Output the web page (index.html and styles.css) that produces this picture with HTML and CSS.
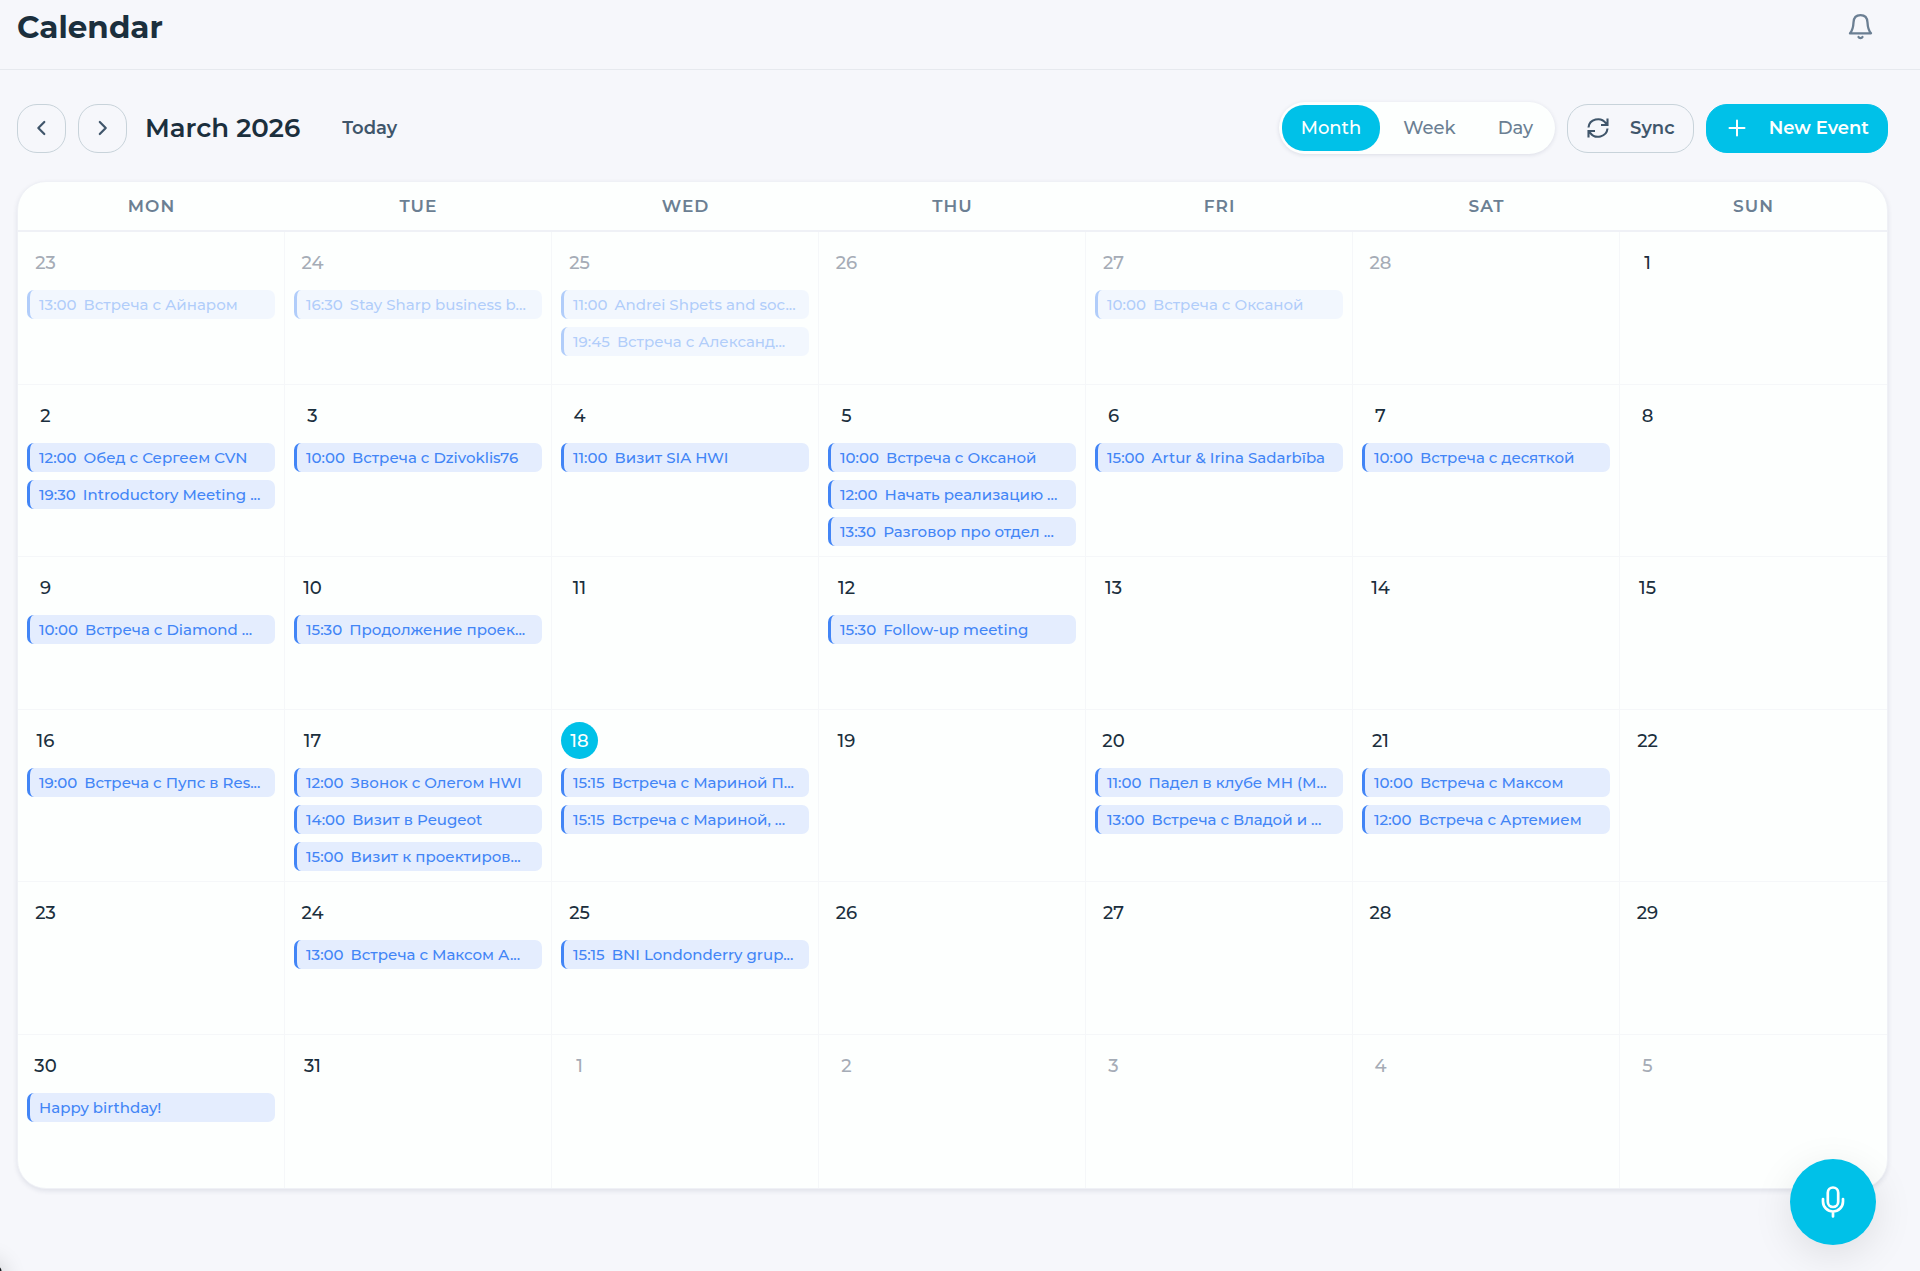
FILE: index.html
```html
<!DOCTYPE html>
<html lang="en">
<head>
    <meta charset="UTF-8">
    <meta name="viewport" content="width=device-width, initial-scale=1.0">
    <title>Calendar</title>
    <link rel="stylesheet" href="styles.css">
</head>
<body>
    <header class="page-header">
        <h1>Calendar</h1>
        <button class="icon-btn" type="button" aria-label="Notifications">
            <svg class="bell" viewBox="0 0 28 30" fill="none" stroke="currentColor" stroke-width="2.300" stroke-linecap="round" stroke-linejoin="round">
                <path d="M14.500 3.200C10.300 3.200 7.700 6 7.500 10.500C7.300 15 6.500 18.500 4 21.300H25C22.500 18.500 21.700 15 21.500 10.500C21.300 6 18.700 3.200 14.500 3.200Z"/>
                <path d="M12.500 25c.7 1.400 3.300 1.400 4 0"/>
            </svg>
        </button>
    </header>

    <main>
        <div class="toolbar">
            <div class="toolbar-left">
                <button class="nav-btn" type="button" aria-label="Previous month">
                    <svg viewBox="0 0 24 24" fill="none" stroke="currentColor" stroke-width="2.400" stroke-linecap="round" stroke-linejoin="round"><path d="M14.500 5.500 8 12l6.500 6.500"/></svg>
                </button>
                <button class="nav-btn" type="button" aria-label="Next month">
                    <svg viewBox="0 0 24 24" fill="none" stroke="currentColor" stroke-width="2.400" stroke-linecap="round" stroke-linejoin="round"><path d="M8.500 5.500 15 12 8.500 18.500"/></svg>
                </button>
                <h2>March 2026</h2>
                <button class="today-btn" type="button">Today</button>
            </div>
            <div class="toolbar-right">
                <div class="views">
                    <button class="active" type="button">Month</button>
                    <button type="button">Week</button>
                    <button type="button">Day</button>
                </div>
                <button class="btn btn-outline" type="button">
                    <svg viewBox="0 0 24 24" fill="none" stroke="currentColor" stroke-width="2.100" stroke-linecap="butt" stroke-linejoin="miter"><path d="M2.500 11.500a9.500 9 0 0 1 17.300-4.300L21.500 9M21.500 2.500V9h-6.500M21.500 12.500a9.500 9 0 0 1-17.300 4.300L2.500 15M2.500 21.500V15H9"/></svg>
                    Sync
                </button>
                <button class="btn btn-primary" type="button">
                    <svg viewBox="0 0 24 24" fill="none" stroke="currentColor" stroke-width="2" stroke-linecap="round"><path d="M12 4.500v15M4.500 12h15"/></svg>
                    New Event
                </button>
            </div>
        </div>

        <div class="calendar">
            <table>
                <thead>
                    <tr>
                        <th>MON</th>
                        <th>TUE</th>
                        <th>WED</th>
                        <th>THU</th>
                        <th>FRI</th>
                        <th>SAT</th>
                        <th>SUN</th>
                    </tr>
                </thead>
                <tbody>
                    <tr>
                        <td class="other"><span class="day">23</span><a class="event" href="#"><time>13:00</time> Встреча с Айнаром</a></td>
                        <td class="other"><span class="day">24</span><a class="event" href="#"><time>16:30</time> Stay Sharp business b...</a></td>
                        <td class="other"><span class="day">25</span><a class="event" href="#"><time>11:00</time> Andrei Shpets and soc...</a><a class="event" href="#"><time>19:45</time> Встреча с Александ...</a></td>
                        <td class="other"><span class="day">26</span></td>
                        <td class="other"><span class="day">27</span><a class="event" href="#"><time>10:00</time> Встреча с Оксаной</a></td>
                        <td class="other"><span class="day">28</span></td>
                        <td><span class="day">1</span></td>
                    </tr>
                    <tr>
                        <td><span class="day">2</span><a class="event" href="#"><time>12:00</time> Обед с Сергеем CVN</a><a class="event" href="#"><time>19:30</time> Introductory Meeting ...</a></td>
                        <td><span class="day">3</span><a class="event" href="#"><time>10:00</time> Встреча с Dzivoklis76</a></td>
                        <td><span class="day">4</span><a class="event" href="#"><time>11:00</time> Визит SIA HWI</a></td>
                        <td><span class="day">5</span><a class="event" href="#"><time>10:00</time> Встреча с Оксаной</a><a class="event" href="#"><time>12:00</time> Начать реализацию ...</a><a class="event" href="#"><time>13:30</time> Разговор про отдел ...</a></td>
                        <td><span class="day">6</span><a class="event" href="#"><time>15:00</time> Artur &amp; Irina Sadarbība</a></td>
                        <td><span class="day">7</span><a class="event" href="#"><time>10:00</time> Встреча с десяткой</a></td>
                        <td><span class="day">8</span></td>
                    </tr>
                    <tr>
                        <td><span class="day">9</span><a class="event" href="#"><time>10:00</time> Встреча с Diamond ...</a></td>
                        <td><span class="day">10</span><a class="event" href="#"><time>15:30</time> Продолжение проек...</a></td>
                        <td><span class="day">11</span></td>
                        <td><span class="day">12</span><a class="event" href="#"><time>15:30</time> Follow-up meeting</a></td>
                        <td><span class="day">13</span></td>
                        <td><span class="day">14</span></td>
                        <td><span class="day">15</span></td>
                    </tr>
                    <tr>
                        <td><span class="day">16</span><a class="event" href="#"><time>19:00</time> Встреча с Пупс в Res...</a></td>
                        <td><span class="day">17</span><a class="event" href="#"><time>12:00</time> Звонок с Олегом HWI</a><a class="event" href="#"><time>14:00</time> Визит в Peugeot</a><a class="event" href="#"><time>15:00</time> Визит к проектиров...</a></td>
                        <td><span class="day today">18</span><a class="event" href="#"><time>15:15</time> Встреча с Мариной П...</a><a class="event" href="#"><time>15:15</time> Встреча с Мариной, ...</a></td>
                        <td><span class="day">19</span></td>
                        <td><span class="day">20</span><a class="event" href="#"><time>11:00</time> Падел в клубе МН (М...</a><a class="event" href="#"><time>13:00</time> Встреча с Владой и ...</a></td>
                        <td><span class="day">21</span><a class="event" href="#"><time>10:00</time> Встреча с Максом</a><a class="event" href="#"><time>12:00</time> Встреча с Артемием</a></td>
                        <td><span class="day">22</span></td>
                    </tr>
                    <tr>
                        <td><span class="day">23</span></td>
                        <td><span class="day">24</span><a class="event" href="#"><time>13:00</time> Встреча с Максом А...</a></td>
                        <td><span class="day">25</span><a class="event" href="#"><time>15:15</time> BNI Londonderry grup...</a></td>
                        <td><span class="day">26</span></td>
                        <td><span class="day">27</span></td>
                        <td><span class="day">28</span></td>
                        <td><span class="day">29</span></td>
                    </tr>
                    <tr>
                        <td><span class="day">30</span><a class="event" href="#">Happy birthday!</a></td>
                        <td><span class="day">31</span></td>
                        <td class="other"><span class="day">1</span></td>
                        <td class="other"><span class="day">2</span></td>
                        <td class="other"><span class="day">3</span></td>
                        <td class="other"><span class="day">4</span></td>
                        <td class="other"><span class="day">5</span></td>
                    </tr>
                </tbody>
            </table>
        </div>
    </main>

    <!-- Floating buttons -->
    <button class="mic-btn" type="button" aria-label="Voice input">
        <svg viewBox="0 0 36 36" fill="none" stroke="currentColor" stroke-width="2.700" stroke-linecap="round" stroke-linejoin="round">
            <rect x="12.800" y="3.500" width="10.400" height="19.500" rx="5.200"/>
            <path d="M8 15v2.500a10 10 0 0 0 20 0V15M18 27.500v5"/>
        </svg>
    </button>
    <div class="corner-badge"></div>
</body>
</html>
```
FILE: styles.css
```css
* {
    box-sizing: border-box;
}

body {
    font-family: 'Montserrat', 'Inter', sans-serif;
    background-color: #f6f7fb;
    margin: 0;
    min-height: 100vh;
    color: #1b2f3d;
}

button {
    font-family: inherit;
    border: none;
    background: none;
    padding: 0;
    cursor: pointer;
}

svg {
    display: block;
}

.page-header {
    display: flex;
    justify-content: space-between;
    align-items: center;
    height: 70px;
    padding: 0 46px 16px 17px;
    border-bottom: 1px solid #e6e9ee;
}

h1 {
    margin: 0;
    font-size: 31px;
    font-weight: 700;
}

.icon-btn {
    color: #6b7f93;
}

.bell {
    width: 28px;
    height: 30px;
}

main {
    padding: 32px 32px 48px 17px;
}

/* Toolbar */
.toolbar {
    display: flex;
    justify-content: space-between;
    align-items: center;
    margin-bottom: 27px;
}

.toolbar-left,
.toolbar-right {
    display: flex;
    align-items: center;
    gap: 12px;
}

.nav-btn {
    display: flex;
    align-items: center;
    justify-content: center;
    width: 49px;
    height: 49px;
    border: 1px solid #c8d3da;
    border-radius: 20px;
    color: #40566b;
}

.nav-btn svg {
    width: 22px;
    height: 22px;
}

h2 {
    margin: 0 0 0 6px;
    font-size: 26px;
    font-weight: 600;
}

.today-btn {
    padding: 0 30px;
    font-size: 18px;
    font-weight: 600;
    color: #40566b;
}

.views {
    display: flex;
    gap: 4px;
    padding: 3px;
    border-radius: 26px;
    background-color: #fdfffe;
    box-shadow: 0 1px 4px rgba(30, 40, 80, 0.12);
}

.views button {
    height: 46px;
    padding: 0 19px;
    border-radius: 22px;
    font-size: 18px;
    font-weight: 500;
    color: #6b7f93;
}

.views .active {
    background-color: #00c1e8;
    color: #fdfffe;
}

.btn {
    display: flex;
    align-items: center;
    gap: 20px;
    height: 49px;
    padding: 0 18px;
    border: 1px solid transparent;
    border-radius: 21px;
    font-size: 18px;
    font-weight: 600;
}

.btn svg {
    width: 24px;
    height: 24px;
}

.btn-outline {
    border-color: #c8d3da;
    color: #40566b;
}

.btn-primary {
    background-color: #00c1e8;
    border-color: #00c1e8;
    color: #fdfffe;
}

/* Calendar grid */
.calendar {
    overflow: hidden;
    border-radius: 29px;
    border: 1px solid #eff1f6;
    background-color: #fdfffe;
    box-shadow: 0 2px 5px rgba(30, 40, 80, 0.1);
}

table {
    width: 100%;
    table-layout: fixed;
    border-collapse: separate;
    border-spacing: 0;
}

th {
    height: 50px;
    padding: 0;
    border-bottom: 2px solid #eff1f6;
    font-size: 17px;
    font-weight: 600;
    letter-spacing: 1px;
    color: #6b7f93;
}

td {
    height: 153px;
    padding: 12px 9px 10px;
    vertical-align: top;
    border-right: 1px solid #f5f7f9;
    border-bottom: 1px solid #f5f7f9;
}

td:last-child {
    border-right: none;
}

tr:last-child td {
    border-bottom: none;
}

.day {
    display: flex;
    align-items: center;
    justify-content: center;
    width: 37px;
    height: 37px;
    margin-bottom: 9px;
    border-radius: 50%;
    font-size: 18px;
    font-weight: 500;
}

.day.today {
    background-color: #00c1e8;
    color: #fdfffe;
}

.event {
    display: block;
    height: 29px;
    padding: 0 9px;
    border-left: 3px solid #4285f6;
    border-radius: 7px;
    background-color: #e4edfe;
    font-size: 15px;
    font-weight: 500;
    line-height: 29px;
    color: #4285f6;
    text-decoration: none;
    white-space: nowrap;
    overflow: hidden;
}

.event + .event {
    margin-top: 8px;
}

.event time {
    margin-right: 3px;
}

/* Days outside the current month */
.other .day {
    color: #a5acb6;
}

.other .event {
    opacity: 0.4;
}

/* Floating buttons */
.mic-btn {
    position: fixed;
    right: 44px;
    bottom: 26px;
    display: flex;
    align-items: center;
    justify-content: center;
    width: 86px;
    height: 86px;
    border-radius: 50%;
    background-color: #00c1e8;
    color: #fdfffe;
    box-shadow: 0 10px 40px rgba(0, 0, 0, 0.1);
}

.mic-btn svg {
    width: 36px;
    height: 36px;
}

.corner-badge {
    position: fixed;
    left: -38px;
    bottom: -32px;
    width: 40px;
    height: 40px;
    border-radius: 10px;
    background-color: #15181c;
    box-shadow: 0 0 24px rgba(0, 0, 0, 0.2);
}
```
